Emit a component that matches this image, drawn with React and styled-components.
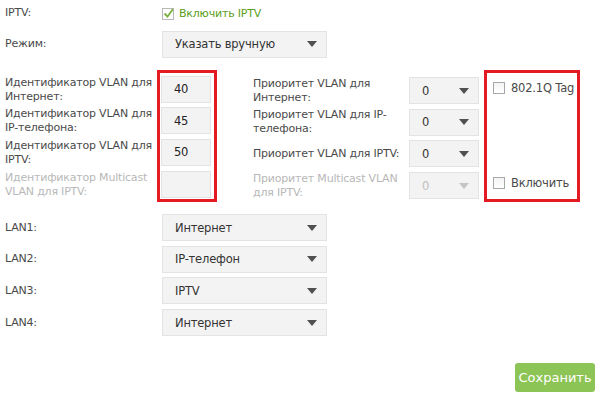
import React from 'react';
import styled, { createGlobalStyle } from 'styled-components';

const GlobalStyle = createGlobalStyle`
    body {
        margin: 0;
        background: #fff;
        font-family: "DejaVu Sans", Verdana, sans-serif;
        font-size: 11px;
        letter-spacing: -0.2px;
        color: #4a4a4a;
    }
`

function Arrow({ disabled }) {
    return (
        <svg width="10" height="6" viewBox="0 0 10 6">
            <path d="M0 0 L10 0 L5 6 Z" fill={disabled ? '#c4c4c4' : '#505050'} />
        </svg>
    )
}

function Select({ value, width, disabled }) {
    return (
        <SelectBox $width={width} $disabled={disabled}>
            <span>{value}</span>
            <Arrow disabled={disabled} />
        </SelectBox>
    )
}

function CheckMark() {
    return (
        <svg width="13" height="13" viewBox="0 0 13 13">
            <rect x="0.5" y="1.5" width="11" height="11" fill="#fff" stroke="#b8b8b8" />
            <path d="M2.5 6.5 L5.5 9.5 L11 2" fill="none" stroke="#7cb342" strokeWidth="1.8" />
        </svg>
    )
}

export default function App() {
    const vlanRows = [
        { label: ['Идентификатор VLAN для', 'Интернет:'], id: '40', prio: ['Приоритет VLAN для', 'Интернет:'] },
        { label: ['Идентификатор VLAN для', 'IP-телефона:'], id: '45', prio: ['Приоритет VLAN для IP-', 'телефона:'] },
        { label: ['Идентификатор VLAN для', 'IPTV:'], id: '50', prio: ['Приоритет VLAN для IPTV:'] },
        { label: ['Идентификатор Multicast', 'VLAN для IPTV:'], id: '', prio: ['Приоритет Multicast VLAN', 'для IPTV:'], disabled: true },
    ]

    const lans = [
        ['LAN1:', 'Интернет'],
        ['LAN2:', 'IP-телефон'],
        ['LAN3:', 'IPTV'],
        ['LAN4:', 'Интернет'],
    ]

    return (
        <Page>
            <GlobalStyle />
            <Row $height={26}>
                <Label>IPTV:</Label>
                <CheckLine $green>
                    <CheckMark />
                    Включить IPTV
                </CheckLine>
            </Row>
            <Row $height={36}>
                <Label>Режим:</Label>
                <Select value="Указать вручную" width={165} />
            </Row>

            <VlanSection>
                <LabelColumn>
                    {vlanRows.map((r, i) => (
                        <Cell key={i}>
                            <Label $disabled={r.disabled}>{r.label.map((l, j) => <div key={j}>{l}</div>)}</Label>
                        </Cell>
                    ))}
                </LabelColumn>
                <RedBox>
                    {vlanRows.map((r, i) => (
                        <Cell key={i}>
                            <Input $disabled={r.disabled}>{r.id}</Input>
                        </Cell>
                    ))}
                </RedBox>
                <PrioLabels>
                    {vlanRows.map((r, i) => (
                        <Cell key={i}>
                            <Label $disabled={r.disabled}>{r.prio.map((l, j) => <div key={j}>{l}</div>)}</Label>
                        </Cell>
                    ))}
                </PrioLabels>
                <SelectColumn>
                    {vlanRows.map((r, i) => (
                        <Cell key={i}>
                            <Select value="0" width={70} disabled={r.disabled} />
                        </Cell>
                    ))}
                </SelectColumn>
                <TagBox>
                    <CheckLine>
                        <EmptyBox />
                        802.1Q Tag
                    </CheckLine>
                    <CheckLine>
                        <EmptyBox />
                        Включить
                    </CheckLine>
                </TagBox>
            </VlanSection>

            <LanList>
                {lans.map(([l, v]) => (
                    <Row key={l} $height={27}>
                        <Label>{l}</Label>
                        <Select value={v} width={165} />
                    </Row>
                ))}
            </LanList>

            <Footer>
                <SaveButton>Сохранить</SaveButton>
            </Footer>
        </Page>
    );
}

const Page = styled.div`
    width: 603px;
    height: 400px;
    padding-left: 5px;
    box-sizing: border-box;
    display: flex;
    flex-direction: column;
`

const Row = styled.div`
    display: grid;
    grid-template-columns: 157px auto;
    align-items: center;
    height: ${p => p.$height}px;
`

const Label = styled.div`
    color: ${p => p.$disabled ? '#b8b8b8' : '#4a4a4a'};
    line-height: 14px;
`

const CheckLine = styled.div`
    display: flex;
    align-items: center;
    gap: 4px;
    white-space: nowrap;
    color: ${p => p.$green ? '#5a9e1a' : '#4a4a4a'};
`

const EmptyBox = styled.span`
    display: inline-block;
    flex: none;
    width: 10px;
    height: 10px;
    border: 1px solid #a8a8a8;
    background: linear-gradient(#f4f4f4, #fff);
    margin-right: 2px;
`

const SelectBox = styled.div`
    box-sizing: border-box;
    width: ${p => p.$width}px;
    height: 27px;
    background: #f3f3f3;
    border: 1px solid #e3e3e3;
    display: flex;
    align-items: center;
    justify-content: space-between;
    padding: 0 9px 0 12px;
    font-size: 11.5px;
    color: ${p => p.$disabled ? '#c0c0c0' : '#333'};
`

const VlanSection = styled.div`
    display: flex;
    margin-top: 8px;
`

const Column = styled.div`
    display: flex;
    flex-direction: column;
    gap: 4.7px;
    padding: 2.5px 0 0;
`

const Cell = styled.div`
    height: 27px;
    display: flex;
    align-items: center;
`

const LabelColumn = styled(Column)`
    width: 152px;
    padding-top: 6px;
`

const RedBox = styled(Column)`
    width: 50px;
    border: 3.5px solid #e51b24;
    padding-left: 1px;
    padding-right: 3px;
    padding-bottom: 0.5px;
`

const Input = styled.div`
    box-sizing: border-box;
    width: 50px;
    height: 27px;
    background: #f3f3f3;
    border: 1px solid #e3e3e3;
    padding-left: 12px;
    display: flex;
    align-items: center;
    font-size: 11.5px;
    color: #222;
`

const PrioLabels = styled(Column)`
    width: 156px;
    margin-left: 36px;
    padding-top: 7px;
`

const SelectColumn = styled(Column)`
    width: 70px;
    padding-top: 7px;
`

const TagBox = styled.div`
    box-sizing: border-box;
    margin-left: 5px;
    width: 96px;
    height: 132px;
    border: 3.5px solid #e51b24;
    display: flex;
    flex-direction: column;
    justify-content: space-between;
    padding: 8px 0 9px 6px;
    font-size: 11.5px;
`

const LanList = styled.div`
    display: flex;
    flex-direction: column;
    gap: 4.7px;
    margin-top: 12px;
`

const Footer = styled.div`
    display: flex;
    justify-content: flex-end;
    padding-right: 8px;
    margin-top: 27px;
`

const SaveButton = styled.button`
    width: 80px;
    height: 29px;
    border: none;
    border-radius: 3px;
    background: #8dc456;
    color: #fff;
    font-family: "DejaVu Sans", Verdana, sans-serif;
    font-size: 13px;
    padding: 0;
`
